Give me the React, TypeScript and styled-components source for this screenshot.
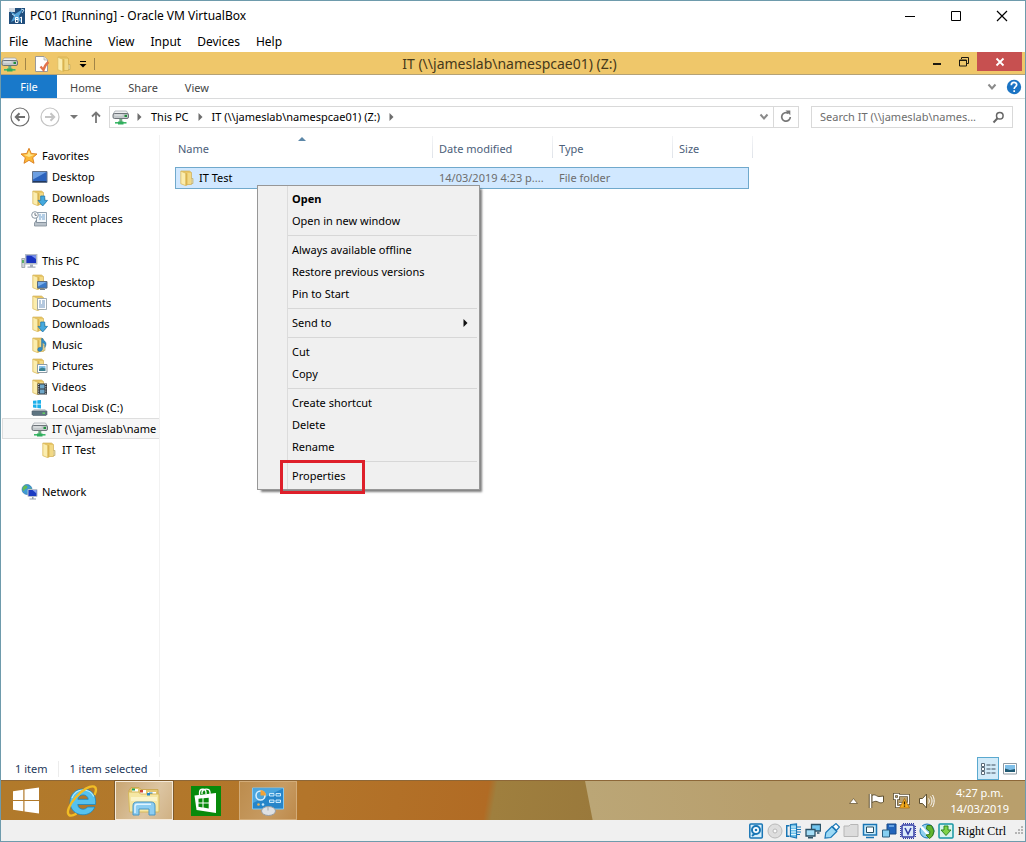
import React from "react";
import styled, { createGlobalStyle, css } from "styled-components";

const GlobalStyle = createGlobalStyle`
  *, *::before, *::after { box-sizing: border-box; }
  body { margin: 0; background: #fff; }
  button, input { font: inherit; color: inherit; }
  button { border: 0; padding: 0; background: none; }
  ul { list-style: none; margin: 0; padding: 0; }
  svg { display: block; flex: none; }
`;

/* ---------- window of the virtual machine ---------- */

const VmWindow = styled.div`
  display: flex;
  flex-direction: column;
  min-height: 100vh;
  border: 1px solid #6e9bac;
  background: #fff;
  color: #000;
  font: 12px/16px "Noto Sans", "Open Sans", sans-serif;
`;

const VmTitleBar = styled.header`
  display: flex;
  align-items: center;
  height: 30px;
  padding-left: 8px;
`;

const VmTitle = styled.h1`
  flex: 1;
  margin: 0 0 0 5px;
  font-size: 12px;
  font-weight: 400;
`;

const VmWindowButton = styled.button`
  display: grid;
  place-items: center;
  width: 46px;
  height: 30px;
`;

const VmMenuBar = styled.nav`
  display: flex;
  gap: 16px;
  height: 21px;
  padding-left: 8px;
`;

const VmMenuItem = styled.button`
  height: 21px;
`;

const VmStatusBar = styled.footer`
  display: flex;
  align-items: center;
  justify-content: flex-end;
  gap: 3px;
  height: 21px;
  padding-right: 2px;
  background: #f0f0f0;
`;

const HostKey = styled.span`
  margin: 0 5px 0 1px;
  font: 12px/16px "Liberation Serif", serif;
`;

/* ---------- Explorer window ---------- */

const Explorer = styled.main`
  display: flex;
  flex: 1;
  flex-direction: column;
  font-size: 11px;
`;

const TitleBar = styled.header`
  display: grid;
  grid-template-columns: 1fr auto 1fr;
  height: 23px;
  padding-right: 7px;
  border-bottom: 1px solid #b5a276;
  background: #efc76a;
`;

const QuickAccess = styled.div`
  display: flex;
  align-items: center;
  gap: 6px;
`;

const QuickDivider = styled.span`
  width: 1px;
  height: 12px;
  margin: 0 2px 0 1px;
  background: #a18548;
`;

const Title = styled.h2`
  margin: 0;
  color: #46391b;
  font-size: 14px;
  font-weight: 400;
  line-height: 24px;
`;

const Controls = styled.div`
  display: flex;
  justify-content: flex-end;
  margin-right: -4px;
`;

const ControlButton = styled.button<{ $close?: boolean }>`
  display: grid;
  place-items: center;
  width: 27px;
  height: 19px;
  ${(p) => p.$close && css`
    width: 45px;
    background: #c75050;
  `}
`;

const Ribbon = styled.nav`
  display: flex;
  align-items: center;
  height: 24px;
  padding-right: 3px;
  border-bottom: 1px solid #dadbdc;
`;

const RibbonTab = styled.button<{ $file?: boolean }>`
  height: 23px;
  padding: 2px 14px 0 13px;
  color: #444;
  ${(p) => p.$file && css`
    width: 56px;
    padding: 0;
    background: #1979ca;
    color: #fff;
  `}
`;

const RibbonEnd = styled.div`
  display: flex;
  align-items: center;
  gap: 9px;
  margin-left: auto;
`;

const IconButton = styled.button<{ $end?: boolean }>`
  display: grid;
  place-items: center;
  margin-left: ${(p) => (p.$end ? "auto" : 0)};
`;

const AddressRow = styled.div`
  display: flex;
  align-items: center;
  height: 36px;
  padding: 0 12px 0 9px;
`;

const NavButtons = styled.div`
  display: flex;
  align-items: center;
  gap: 10px;
  width: 99px;
`;

const AddressBox = styled.div`
  display: flex;
  flex: 1;
  align-items: center;
  gap: 8px;
  height: 22px;
  border: 1px solid #d9d9d9;
  padding-left: 2px;
`;

const AddressEnd = styled.div`
  display: flex;
  align-items: center;
  gap: 4px;
  margin-left: auto;
`;

const Crumb = styled.button`
  padding: 0 1px;
  white-space: nowrap;
`;

const RefreshButton = styled.button`
  display: grid;
  place-items: center;
  width: 25px;
  height: 20px;
  border-left: 1px solid #d9d9d9;
`;

const SearchBox = styled.label`
  display: flex;
  align-items: center;
  width: 202px;
  height: 22px;
  margin-left: 12px;
  padding: 0 7px 0 8px;
  border: 1px solid #d9d9d9;
`;

const SearchInput = styled.input`
  flex: 1;
  min-width: 0;
  padding: 0;
  border: 0;
  outline: 0;
  background: none;
  &::placeholder { color: #6d6d6d; opacity: 1; }
`;

const Body = styled.div`
  display: flex;
  flex: 1;
`;

const Sidebar = styled.nav`
  width: 159px;
  padding-top: 10px;
  border-right: 1px solid #f2f2f2;
`;

const TreeGroup = styled.ul`
  margin-bottom: 21px;
`;

const TreeItem = styled.li<{ $level: number; $selected?: boolean }>`
  display: flex;
  align-items: center;
  gap: 4px;
  height: 21px;
  padding-left: ${(p) => 20 + p.$level * 10}px;
  white-space: nowrap;
  ${(p) => p.$selected && css`
    margin-left: 1px;
    padding-left: ${18 + p.$level * 10}px;
    border: 1px solid #dedede;
    border-right: 0;
    background: #f7f7f7;
  `}
`;

const TreeLink = styled.a`
  color: #000;
  text-decoration: none;
`;

const FilePane = styled.section`
  position: relative;
  flex: 1;
  padding-left: 15px;
`;

const FileTable = styled.table`
  width: 578px;
  table-layout: fixed;
  border-collapse: separate;
  border-spacing: 0;
`;

const Column = styled.col<{ $width: number }>`
  width: ${(p) => p.$width}px;
`;

const HeadCell = styled.th`
  position: relative;
  height: 32px;
  padding: 0 0 4px 6px;
  color: #4c607a;
  font-weight: 400;
  text-align: left;
  &:first-child { padding-left: 3px; }
  &::after {
    content: "";
    position: absolute;
    top: 1px;
    right: 0;
    width: 1px;
    height: 22px;
    background: linear-gradient(#f4f5f7, #dfe3e9);
  }
`;

const SortMark = styled.span`
  position: absolute;
  top: 2px;
  left: 123px;
`;

const Cell = styled.td`
  height: 22px;
  padding: 0 0 0 6px;
  border: 1px solid #70a9cc;
  border-width: 1px 0;
  background: #d1e8ff;
  color: #6d6d6d;
  white-space: nowrap;
  &:first-child {
    padding-left: 3px;
    border-left-width: 1px;
    color: #000;
  }
  &:nth-child(4) { border-right-width: 1px; }
  &:nth-child(5) { padding: 0; border: 0; background: none; }
`;

const FileName = styled.span`
  display: flex;
  align-items: center;
  gap: 3px;
`;

const ContextMenu = styled.ul`
  position: absolute;
  top: 50px;
  left: 97px;
  width: 223px;
  padding: 2px;
  border: 1px solid #979797;
  background: linear-gradient(90deg, transparent 29px, #dcdcdc 29px, #dcdcdc 30px, transparent 30px) #f0f0f0;
  box-shadow: 3px 3px 2px -1px rgba(0, 0, 0, 0.5);
`;

const MenuGroup = styled.li`
  & + &::before {
    content: "";
    display: block;
    height: 1px;
    margin: 3px 0 3px 28px;
    background: #d7d7d7;
  }
`;

const MenuItem = styled.button<{ $default?: boolean }>`
  position: relative;
  display: flex;
  align-items: center;
  justify-content: space-between;
  width: 100%;
  height: 22px;
  padding: 0 9px 0 32px;
  font-weight: ${(p) => (p.$default ? 700 : 400)};
`;

const Highlight = styled.span`
  position: absolute;
  top: -5px;
  left: 20px;
  width: 85px;
  height: 34px;
  border: 3px solid #de1f2a;
`;

const StatusBar = styled.footer`
  display: flex;
  align-items: center;
  height: 23px;
  padding: 0 4px 0 14px;
  color: #1e395b;
`;

const StatusText = styled.span`
  padding-right: 11px;
  margin-right: 10px;
  border-right: 1px solid #ececec;
`;

const ViewButtons = styled.div`
  display: flex;
  margin-left: auto;
`;

const ViewButton = styled.button<{ $active?: boolean }>`
  display: grid;
  place-items: center;
  width: 22px;
  height: 23px;
  border: 1px solid ${(p) => (p.$active ? "#5aa9cf" : "transparent")};
  background: ${(p) => (p.$active ? "#d2eaf8" : "none")};
`;

/* ---------- taskbar ---------- */

const Taskbar = styled.footer`
  display: flex;
  gap: 4px;
  height: 40px;
  padding-right: 16px;
  border-top: 1px solid #8d6738;
  background:
    linear-gradient(79deg, transparent 57.3%, #bba676 57.4%, #b89f6d 75%, #b99f6c),
    linear-gradient(100deg, #b17a2b 0%, #b3752a 30%, #b16b24 47.4%, #9f7f3e 48.2%, #99783b 60%);
  color: #fff;
  font-size: 11px;
`;

const TaskButton = styled.button<{ $state?: "active" | "open"; $start?: boolean }>`
  display: grid;
  place-items: center;
  width: ${(p) => (p.$start ? 48 : 58)}px;
  height: 39px;
  padding-left: ${(p) => (p.$start ? 2 : 0)}px;
  border: 1px solid transparent;
  ${(p) => p.$state === "active" && css`
    border-color: #f6ead9;
    background: linear-gradient(120deg, #c9a673, #dcc5a2 60%, #d0b184);
    box-shadow: 0 0 0 1px #7d5a2c;
  `}
  ${(p) => p.$state === "open" && css`
    border-color: #d3ac78;
    background: linear-gradient(120deg, #bc8c4d, #c79b62 60%, #bd8a4b);
  `}
`;

const Tray = styled.div`
  display: flex;
  align-items: center;
  gap: 8px;
  margin-left: auto;
`;

const Clock = styled.time`
  margin-left: 7px;
  text-align: center;
`;

/* ---------- icons ---------- */

const Folder = ({ children }: { children?: React.ReactNode }) => (
  <svg width="17" height="16" viewBox="0 0 17 16">
    <path d="M2 1h8.500l2 1.500V14.500H6z" fill="#e9c766" stroke="#cfa94a" strokeWidth=".6" />
    <path d="M8 3h4v11H8z" fill="#f2d985" />
    <path d="M1.800 1.200l5 2v12.500l-5-2z" fill="#fbedae" stroke="#dcbb5f" strokeWidth=".8" />
    <path d="M6.800 3.200h1.600v12L6.800 15.700z" fill="#d9b34f" />
    <path d="M12.500 8.500h1.500v5h-1.500" fill="#e3d9a8" stroke="#b9a45c" strokeWidth=".6" />
    {children}
  </svg>
);

const DownArrowPart = () => (
  <path d="M9.700 6h4v4.400h2.800L11.700 16 7 10.400h2.700z" fill="#45a9de" stroke="#2178ae" strokeWidth=".8" />
);

const MonitorPart = () => (
  <g>
    <path d="M6.500 7.500h9.500v6.600H6.500z" fill="#3978c8" stroke="#5c6b7c" />
    <path d="M7 8h8.500L7 12.500z" fill="#79aeea" />
    <path d="M9 15.500h5" stroke="#78818b" />
  </g>
);

const PagePart = () => (
  <g>
    <path d="M6.500 3.500h9v11h-9z" fill="#fff" stroke="#8d9aa5" strokeWidth=".8" />
    <path d="M8 6h2m1 0h3M8 8h2m1 0h3M8 10h6M8 12h6" stroke="#6a92bd" />
  </g>
);

const NotePart = () => (
  <path d="M10.500 1.500v9.200c-1.400-.9-3.800-.2-3.800 2 0 1.700 2.400 2.300 3.900 1 .9-.8.9-1.600.9-3V5.500c2 .8 2.800 2.400 2.300 5 2-3.200 1.500-5.200-.5-6.700-1.300-1-1.300-1.400-1.300-2.300z" fill="#2f8bc7" stroke="#1c6595" strokeWidth=".4" />
);

const PicturePart = () => (
  <g>
    <path d="M6.500 6.500h9.500v8h-9.500z" fill="#fff" stroke="#8d9aa5" />
    <path d="M8 8h6.500v3H8z" fill="#86c2ea" />
    <path d="M8 11l3-1.500 3.500 1V13H8z" fill="#3d8393" />
  </g>
);

const FilmPart = () => (
  <g>
    <path d="M6.500 4.500h9.500v11h-9.500z" fill="#30363d" />
    <path d="M9 5.500h4.500v4H9zM9 10.500h4.500v4H9z" fill="#6fa7c9" />
    <path d="M7.700 5v10M14.800 5v10" stroke="#dfe3e6" strokeDasharray="1 1.200" />
  </g>
);

const StarIcon = () => (
  <svg width="17" height="16" viewBox="0 0 17 16">
    <path d="M8 .3l2.300 5.200 5.700.5-4.300 3.700 1.300 5.600-5-3-5 3 1.300-5.600L0 6l5.700-.5z" fill="#fbb938" stroke="#d97c1b" strokeWidth=".9" />
    <path d="M8 2.500l1.500 4 4 .3L8 9 2.500 6.800l4-.3z" fill="#ffe48a" />
  </svg>
);

const DesktopIcon = () => (
  <svg width="17" height="16" viewBox="0 0 17 16">
    <path d="M1.500 2.500h14.500v11H1.500z" fill="#2c63bd" stroke="#62728a" />
    <path d="M2 3h13.500L2 10.500z" fill="#6d9fe2" />
    <path d="M2 12.500h13.500" stroke="#23395e" />
  </svg>
);

const RecentIcon = () => (
  <svg width="17" height="16" viewBox="0 0 17 16">
    <path d="M5.500 1.500h10v10h-10z" fill="#f4f8fb" stroke="#93a3b1" />
    <path d="M8 4h2m1 0h3M8 6h6M8 8h2m1 0h3" stroke="#72a3d0" />
    <path d="M3.500 12l2-3v2.500h10V15h-12z" fill="#b9c2ca" stroke="#7e8a95" strokeWidth=".8" />
    <circle cx="4" cy="4" r="3.300" fill="#fff" stroke="#8a97a3" />
    <path d="M4 2v2.300h1.800" fill="none" stroke="#4c5a68" strokeWidth=".8" />
  </svg>
);

const ComputerIcon = () => (
  <svg width="17" height="16" viewBox="0 0 17 16">
    <path d="M.8 5.500h3v9h-3z" fill="#d0d5d8" stroke="#8a9299" strokeWidth=".7" />
    <path d="M2 7v3" stroke="#3da642" strokeWidth="1.500" />
    <path d="M4.700 1.700h11v9h-11z" fill="#1a35c0" stroke="#b4bcc8" strokeWidth="1.400" />
    <path d="M10 2.500h5V6z" fill="#7791f0" />
    <path d="M9 11.500h3v2H9zM6.500 13.500h8v1.300h-8z" fill="#a5adb8" />
  </svg>
);

const DiskIcon = () => (
  <svg width="17" height="16" viewBox="0 0 17 16">
    <path d="M2 .8l3.500-.4v3.400H2zM6.300.3L10 0v3.800H6.300zM2 4.600h3.500V8L2 7.600zM6.300 4.600H10v3.800L6.300 8z" fill="#1cb0ea" />
    <path d="M3 9h11l2 2.500H1z" fill="#c7ced3" />
    <path d="M1 11h15v3.500l-1 1H2l-1-1z" fill="#5d7481" stroke="#50606b" strokeWidth=".6" />
    <path d="M11.500 13.200h2.500" stroke="#62e35b" strokeWidth="1.300" />
  </svg>
);

const NetDriveIcon = () => (
  <svg width="17" height="16" viewBox="0 0 17 16">
    <path d="M3 2h11.500L16.300 5H1.200z" fill="#eef0f1" stroke="#9ba2a6" strokeWidth=".7" />
    <rect x="1" y="4.500" width="15.500" height="5" rx="1.500" fill="#c3c8cb" stroke="#62696e" strokeWidth=".9" />
    <path d="M2.500 6h8" stroke="#e8ebec" />
    <path d="M12.500 5.800H15V8h-2.500z" fill="#1f8e3b" />
    <path d="M7.300 10h3v3h-3z" fill="#6cab7f" />
    <path d="M3 13h11.500v1.600H3z" fill="#3cb868" />
    <path d="M6 12.500h5.500v3H6z" fill="#2fae5c" />
  </svg>
);

const NetworkIcon = () => (
  <svg width="17" height="16" viewBox="0 0 17 16">
    <circle cx="6" cy="5.500" r="5" fill="#3f9bd4" stroke="#2c70a3" strokeWidth=".6" />
    <path d="M3 1.800c2-.9 4 0 3.300 1.600S3.600 4.500 3 6.500 1.500 5 1.500 4.500zM7 6l3-2v4l-3 1z" fill="#65bb54" />
    <path d="M7 5.500h9v7H7z" fill="#1c3cc2" stroke="#bac2cd" />
    <path d="M11.500 6h4v3.500z" fill="#87a0ee" />
    <path d="M11 13h1.500v1.500H15v1H8.500v-1H11z" fill="#96a0ab" />
  </svg>
);

const VmLogo = () => (
  <svg width="16" height="16" viewBox="0 0 16 16">
    <path d="M0 0h16v16H0z" fill="#214e7c" />
    <path d="M0 0h6v4H0z" fill="#d3dbe3" />
    <path d="M1 3l5 3 8-5-4 7 3 7-5-4-6 3 3-6z" fill="#55a3d8" />
    <path d="M12 1l3 1-2 3M3 6l3 2" stroke="#b7dcf4" fill="none" />
    <path d="M6.500 9.500H9v2H6.500zm0 2H9v3H6.500zM12.500 9v6M11 10l1.500-1" stroke="#fff" fill="none" />
  </svg>
);

const PropertiesIcon = () => (
  <svg width="16" height="16" viewBox="0 0 16 16">
    <path d="M1.500.5H10l3.500 3.500v11.500h-12z" fill="#fff" stroke="#9a9a9a" />
    <path d="M10 .5V4h3.500" fill="#e3e6ea" stroke="#a7a7a7" strokeWidth=".7" />
    <path d="M6.500 10.500l3 3.500C10.500 10 12 8 14.500 6" fill="none" stroke="#e2744b" strokeWidth="2.300" />
  </svg>
);

const SmallArrow = ({ color = "#6d6d6d" }: { color?: string }) => (
  <svg width="5" height="8" viewBox="0 0 5 8"><path d="M.5 0l4 4-4 4z" fill={color} /></svg>
);

const Chevron = () => (
  <svg width="10" height="8" viewBox="0 0 10 8"><path d="M1.500 1.500L5 5.500l3.500-4" fill="none" stroke="#8a8a8a" strokeWidth="2" /></svg>
);

const NavCircle = ({ forward }: { forward?: boolean }) => (
  <svg width="20" height="20" viewBox="0 0 20 20" fill="none" stroke={forward ? "#c4c4c4" : "#6f6f6f"}>
    <circle cx="10" cy="10" r="9" strokeWidth="1.200" />
    <path d={forward ? "M5 10h9M10.500 6.200l3.700 3.800-3.700 3.800" : "M15 10H6M9.500 6.200L5.800 10l3.700 3.800"} strokeWidth="2" />
  </svg>
);

const WindowsLogo = () => (
  <svg width="28" height="27" viewBox="0 0 28 27">
    <path d="M1 4.200l10.300-1.400v10.100H1zM12.500 2.600L27 .5v12.400H12.500zM1 14.100h10.300v10.100L1 22.800zM12.500 14.100H27v12.400l-14.500-2.100z" fill="#fff" />
  </svg>
);

const IeLogo = () => (
  <svg width="34" height="34" viewBox="0 0 34 34">
    <path d="M30.500 20.500H12.800c.3 3 2.300 4.700 5.200 4.700 2 0 3.500-.8 4.500-2.200h7.300c-1.700 4.700-6.300 7.800-11.900 7.800C10.500 30.800 5 25.500 5 18S10.500 5 18 5c7.700 0 12.700 5.200 12.700 12.800 0 1-.1 1.900-.2 2.700zM12.900 15.300h10.300c-.3-2.800-2.300-4.400-5.100-4.400s-4.800 1.600-5.200 4.400z" fill="#56c2ee" stroke="#1b86c2" strokeWidth=".8" />
    <path d="M7 14c2-5 6-8 11-8 5.500 0 9 2.600 10.800 6.500" fill="none" stroke="#b4ebff" strokeWidth="1.200" />
    <path d="M29.500 11c1.800-4 1.900-7.300-.3-8.300C25.500 1 17 6 10.500 13.500 4 21 1.200 28.700 4 31c1.500 1.200 4.300.5 7.500-1.200" fill="none" stroke="#f2bd25" strokeWidth="2.400" />
  </svg>
);

const ExplorerLogo = () => (
  <svg width="34" height="32" viewBox="0 0 34 32">
    <path d="M2 5.500l2-3h8l2 2h17v6H2z" fill="#e3c771" stroke="#c8a347" strokeWidth=".8" />
    <path d="M5 4h6v4H5zM13 5h6v4h-6zM21 7h8v4h-8z" fill="#fff" />
    <path d="M5 3.500h3v2H5z" fill="#21a353" />
    <path d="M13 5h3v2.500h-3z" fill="#cf4635" />
    <path d="M22 7.500h3.500V10H22z" fill="#2688c5" />
    <path d="M1.500 7h10l2 2h18.500v18H2.500z" fill="#f5e7a4" stroke="#d7b95c" />
    <path d="M20 8h3v2.500h-3z" fill="#2688c5" />
    <path d="M4 12h26v4H4z" fill="#fbf4c9" />
    <path d="M6 30V21c0-3 1.500-4 4-4h14c2.500 0 4 1 4 4v9h-6v-6H12v6z" fill="#8ccdf1" stroke="#4996c5" />
    <path d="M8 28v-6.500c0-1.500.8-2.300 2.300-2.300H24" fill="none" stroke="#dff4ff" strokeWidth="1.500" />
  </svg>
);

const StoreLogo = () => (
  <svg width="30" height="30" viewBox="0 0 30 30">
    <path d="M0 0h30v30H0z" fill="#078a0b" />
    <path d="M3.500 9.500L25 7v20L5.500 24z" fill="#fff" />
    <path d="M8.500 9V6.500c0-4 6-4.500 6.500-.5v2.200M11 8V6c1-3.500 7.500-4 8 0v2" fill="none" stroke="#fff" strokeWidth="1.300" />
    <path d="M7.500 12.700l4-.4v4.100h-4zM12.500 12.200l5.200-.5v4.700h-5.200zM7.500 17.400h4v4l-4-.6zM12.500 17.400h5.200v5l-5.200-.8z" fill="#078a0b" />
  </svg>
);

const ControlPanelLogo = () => (
  <svg width="34" height="30" viewBox="0 0 34 30">
    <path d="M1.500 2h31v21h-31z" fill="#2685c9" stroke="#82c7ef" />
    <path d="M2 2.500h30L2 17z" fill="#4ba5dd" />
    <circle cx="9.500" cy="9.500" r="4.500" fill="none" stroke="#d8f0ff" strokeWidth="1.500" />
    <path d="M9.500 9.500V4A5.500 5.500 0 0 1 15 9.500z" fill="#f2a339" />
    <path d="M18.500 7.500h4.500v2.500h-4.500zM25 7.500h4.500v2.500H25zM18.500 14h4.500v2.500h-4.500zM25 14h4.500v2.500H25z" fill="#3f9bd8" stroke="#d9f1ff" strokeWidth=".9" />
    <circle cx="7.500" cy="18.500" r="1.300" fill="#e9b155" />
    <circle cx="12" cy="18.500" r="1.300" fill="#c6e8fa" />
    <ellipse cx="17.500" cy="25" rx="7" ry="4.500" fill="#dfe1e3" stroke="#989da2" />
    <path d="M17 20.500v4" stroke="#a5a9ad" />
  </svg>
);

const VmStatusIcon = ({ children }: { children: React.ReactNode }) => (
  <svg width="16" height="16" viewBox="0 0 16 16">{children}</svg>
);

const BLUE = "#1976b5";
const vmIcons: React.ReactNode[] = [
  <><rect x="1.800" y="1" width="12.500" height="14" rx="1" fill="#d6effc" stroke={BLUE} strokeWidth="1.500" /><circle cx="8" cy="7" r="4" fill="#fff" stroke={BLUE} strokeWidth="2" /><circle cx="8" cy="7" r="1.300" fill={BLUE} /><path d="M4 13l3-2.500" stroke={BLUE} strokeWidth="2" /></>,
  <><circle cx="8" cy="8" r="7" fill="#dedede" stroke="#b9b9b9" /><circle cx="8" cy="8" r="2" fill="#fafafa" stroke="#b9b9b9" /></>,
  <><path d="M0 2h3.500v1.500H1.500v9h2V14H0z" fill={BLUE} /><path d="M4.500 1.500l6-.5v14l-6-1.500z" fill="#6fc2ea" stroke={BLUE} strokeWidth="1.200" /><path d="M5 4h5M5 6.500h5M5 9h5M5 11.500h5" stroke="#e2f5fd" /><path d="M11 4h4M11 6.500h4M11 9h4M11 11.500h3" stroke={BLUE} strokeWidth="1.200" /></>,
  <><path d="M6.500 1.500h9v6.500h-9z" fill="#72c6ef" stroke="#2b5267" strokeWidth="1.300" /><path d="M1 6.500h9V13H1z" fill="#a5def7" stroke="#2b5267" strokeWidth="1.300" /><path d="M3 14.800h5M12 10h2.500" stroke="#2b5267" strokeWidth="1.500" /></>,
  <><path d="M1 15l.8-5.500 6-6 5 5-6 6z" fill="#9cd9f5" stroke={BLUE} strokeWidth="1.200" /><path d="M8.500 3.500L12 .6 15.400 4l-3 3.500z" fill="#fff" stroke={BLUE} strokeWidth="1.200" /></>,
  <><path d="M1 13.500V3h5l1.500-1.500H15v12z" fill="#dcdcdc" stroke="#b6b6b6" /></>,
  <><path d="M1.500 1.500h13v10.500h-13z" fill="#c8ebfa" stroke={BLUE} strokeWidth="1.500" /><path d="M4.500 4h7v5.500h-7z" fill="#fff" stroke="#254e64" /><path d="M4 14.500h8" stroke={BLUE} strokeWidth="1.500" /></>,
  <><path d="M6 1h9v10H6z" fill="#2264bb" stroke="#174888" /><path d="M1.500 7h7v7h-7z" fill="#85cff1" stroke="#2a5e80" /><path d="M8 3h5" stroke="#7eb7ee" strokeWidth="1.500" /></>,
  <><rect x="2" y="2" width="12" height="12" rx="1" fill="#dcebfb" stroke="#323da5" strokeWidth="1.500" /><path d="M3 .6h11M3 15.400h11M.6 3v11M15.400 3v11" stroke="#323da5" strokeWidth="1.200" strokeDasharray="1 1" /><path d="M5 5l3 6 3-6" fill="none" stroke="#323da5" strokeWidth="1.600" /></>,
  <><circle cx="8" cy="8" r="7" fill="#8fd0ef" stroke={BLUE} /><path d="M2 3.500l9 10" stroke="#fff" strokeWidth="2.500" /><path d="M8 2.500h4.500L15 8l-1.500 5-3 2.500L7 12l3.500-.5.500-3L7.500 6z" fill="#62b52f" stroke="#37791c" /></>,
  <><rect x="1" y="1" width="14" height="14" rx="1" fill="#d8f4ef" stroke="#1795a2" strokeWidth="1.500" /><path d="M6 3h4v4h3l-5 5.500L3 7h3z" fill="#7ed348" stroke="#308421" /></>,
];

/* ---------- content ---------- */

type Node = { label: string; icon: React.ReactNode; level: number; selected?: boolean };

const tree: Node[][] = [
  [
    { label: "Favorites", icon: <StarIcon />, level: 0 },
    { label: "Desktop", icon: <DesktopIcon />, level: 1 },
    { label: "Downloads", icon: <Folder><DownArrowPart /></Folder>, level: 1 },
    { label: "Recent places", icon: <RecentIcon />, level: 1 },
  ],
  [
    { label: "This PC", icon: <ComputerIcon />, level: 0 },
    { label: "Desktop", icon: <Folder><MonitorPart /></Folder>, level: 1 },
    { label: "Documents", icon: <Folder><PagePart /></Folder>, level: 1 },
    { label: "Downloads", icon: <Folder><DownArrowPart /></Folder>, level: 1 },
    { label: "Music", icon: <Folder><NotePart /></Folder>, level: 1 },
    { label: "Pictures", icon: <Folder><PicturePart /></Folder>, level: 1 },
    { label: "Videos", icon: <Folder><FilmPart /></Folder>, level: 1 },
    { label: "Local Disk (C:)", icon: <DiskIcon />, level: 1 },
    { label: "IT (\\\\jameslab\\name", icon: <NetDriveIcon />, level: 1, selected: true },
    { label: "IT Test", icon: <Folder />, level: 2 },
  ],
  [{ label: "Network", icon: <NetworkIcon />, level: 0 }],
];

const menu: string[][] = [
  ["Open", "Open in new window"],
  ["Always available offline", "Restore previous versions", "Pin to Start"],
  ["Send to"],
  ["Cut", "Copy"],
  ["Create shortcut", "Delete", "Rename"],
  ["Properties"],
];

export default function App() {
  return (
    <VmWindow>
      <GlobalStyle />
      <VmTitleBar>
        <VmLogo />
        <VmTitle>PC01 [Running] - Oracle VM VirtualBox</VmTitle>
        <VmWindowButton aria-label="Minimize">
          <svg width="12" height="12"><path d="M1 6.500h10" stroke="#000" /></svg>
        </VmWindowButton>
        <VmWindowButton aria-label="Maximize">
          <svg width="12" height="12"><path d="M1.500 1.500h9v9h-9z" fill="none" stroke="#000" /></svg>
        </VmWindowButton>
        <VmWindowButton aria-label="Close">
          <svg width="12" height="12"><path d="M1 1l10 10M11 1L1 11" stroke="#000" strokeWidth="1.200" /></svg>
        </VmWindowButton>
      </VmTitleBar>
      <VmMenuBar>
        {["File", "Machine", "View", "Input", "Devices", "Help"].map((m) => (
          <VmMenuItem key={m}>{m}</VmMenuItem>
        ))}
      </VmMenuBar>

      <Explorer>
        <TitleBar>
          <QuickAccess>
            <NetDriveIcon />
            <QuickDivider />
            <IconButton aria-label="Properties"><PropertiesIcon /></IconButton>
            <IconButton aria-label="New folder"><Folder /></IconButton>
            <IconButton aria-label="Customize">
              <svg width="8" height="8"><path d="M1 1.500h6" stroke="#000" /><path d="M.5 4h7L4 7.500z" fill="#000" /></svg>
            </IconButton>
            <QuickDivider />
          </QuickAccess>
          <Title>IT (\\jameslab\namespcae01) (Z:)</Title>
          <Controls>
            <ControlButton aria-label="Minimize">
              <svg width="10" height="10"><path d="M1 7h8" stroke="#1e1a10" strokeWidth="2" /></svg>
            </ControlButton>
            <ControlButton aria-label="Restore">
              <svg width="12" height="12"><path d="M1.500 4h7v6h-7zM1 4.500h8" fill="none" stroke="#1e1a10" /><path d="M3.500 3V1.500h7v6H9" fill="none" stroke="#1e1a10" /></svg>
            </ControlButton>
            <ControlButton $close aria-label="Close">
              <svg width="10" height="10"><path d="M1.500 1.500l7 7M8.500 1.500l-7 7" stroke="#fff" strokeWidth="1.800" /></svg>
            </ControlButton>
          </Controls>
        </TitleBar>

        <Ribbon>
          <RibbonTab $file>File</RibbonTab>
          <RibbonTab>Home</RibbonTab>
          <RibbonTab>Share</RibbonTab>
          <RibbonTab>View</RibbonTab>
          <RibbonEnd>
            <IconButton aria-label="Expand the ribbon"><Chevron /></IconButton>
            <IconButton aria-label="Help">
              <svg width="16" height="16" viewBox="0 0 16 16">
                <circle cx="8" cy="8" r="7.200" fill="#1b74c4" />
                <path d="M5.300 6.200c0-3.700 5.400-3.500 5.400-.4 0 1.900-2.500 2-2.500 4.200M8.200 11.300v1.800" fill="none" stroke="#fff" strokeWidth="1.700" />
              </svg>
            </IconButton>
          </RibbonEnd>
        </Ribbon>

        <AddressRow>
          <NavButtons>
            <IconButton aria-label="Back"><NavCircle /></IconButton>
            <IconButton aria-label="Forward"><NavCircle forward /></IconButton>
            <IconButton aria-label="Recent locations">
              <svg width="8" height="6"><path d="M0 1h8L4 5z" fill="#777" /></svg>
            </IconButton>
            <IconButton aria-label="Up">
              <svg width="14" height="12"><path d="M8 12V1.500M4 5.500l4-4 4 4" fill="none" stroke="#777" strokeWidth="1.800" /></svg>
            </IconButton>
          </NavButtons>
          <AddressBox>
            <NetDriveIcon />
            <SmallArrow />
            <Crumb>This PC</Crumb>
            <SmallArrow />
            <Crumb>IT (\\jameslab\namespcae01) (Z:)</Crumb>
            <SmallArrow />
            <AddressEnd>
              <IconButton aria-label="Previous locations"><Chevron /></IconButton>
              <RefreshButton aria-label="Refresh">
                <svg width="14" height="14"><path d="M9.500 3.400A4.300 4.300 0 1 0 11.300 7" fill="none" stroke="#777" strokeWidth="1.700" /><path d="M6.500.5h4.800v4.800z" fill="#777" /></svg>
              </RefreshButton>
            </AddressEnd>
          </AddressBox>
          <SearchBox>
            <SearchInput aria-label="Search" placeholder="Search IT (\\jameslab\names..." />
            <svg width="13" height="13"><circle cx="7.800" cy="4.800" r="3.300" fill="none" stroke="#666" strokeWidth="1.500" /><path d="M5.500 7.300L1.500 11.500" stroke="#666" strokeWidth="2" /></svg>
          </SearchBox>
        </AddressRow>

        <Body>
          <Sidebar>
            {tree.map((group) => (
              <TreeGroup key={group[0].label}>
                {group.map((n) => (
                  <TreeItem key={n.label} $level={n.level} $selected={n.selected}>
                    {n.icon}
                    <TreeLink href="#">{n.label}</TreeLink>
                  </TreeItem>
                ))}
              </TreeGroup>
            ))}
          </Sidebar>
          <FilePane>
            <FileTable>
              <colgroup>
                <Column $width={258} />
                <Column $width={120} />
                <Column $width={120} />
                <Column $width={76} />
                <Column $width={4} />
              </colgroup>
              <thead>
                <tr>
                  <HeadCell>
                    Name
                    <SortMark><svg width="8" height="4"><path d="M0 4l4-4 4 4z" fill="#5c87a8" /></svg></SortMark>
                  </HeadCell>
                  <HeadCell>Date modified</HeadCell>
                  <HeadCell>Type</HeadCell>
                  <HeadCell colSpan={2}>Size</HeadCell>
                </tr>
              </thead>
              <tbody>
                <tr>
                  <Cell><FileName><Folder />IT Test</FileName></Cell>
                  <Cell>14/03/2019 4:23 p....</Cell>
                  <Cell>File folder</Cell>
                  <Cell />
                  <Cell />
                </tr>
              </tbody>
            </FileTable>
            <ContextMenu>
              {menu.map((group) => (
                <MenuGroup key={group[0]}>
                  {group.map((label) => (
                    <MenuItem key={label} $default={label === "Open"}>
                      {label}
                      {label === "Send to" && <SmallArrow color="#111" />}
                      {label === "Properties" && <Highlight />}
                    </MenuItem>
                  ))}
                </MenuGroup>
              ))}
            </ContextMenu>
          </FilePane>
        </Body>

        <StatusBar>
          <StatusText>1 item</StatusText>
          <StatusText>1 item selected</StatusText>
          <ViewButtons>
            <ViewButton $active aria-label="Details">
              <svg width="16" height="14"><path d="M1.500 1.500h3v3h-3zM1.500 5.500h3v3h-3zM1.500 9.500h3v3h-3z" fill="#fff" stroke="#5a6a78" /><path d="M6.500 3h4m1 0h4M6.500 7h4m1 0h4M6.500 11h4m1 0h4" stroke="#3f4f5e" /></svg>
            </ViewButton>
            <ViewButton aria-label="Large icons">
              <svg width="14" height="12"><path d="M.5.500h13v10.500H.5z" fill="#fff" stroke="#8f9aa3" /><path d="M2 2h10v7H2z" fill="#7fbfe8" /><path d="M2 5.500l5 1.500 5-1v3H2z" fill="#1f5872" /></svg>
            </ViewButton>
          </ViewButtons>
        </StatusBar>
      </Explorer>

      <Taskbar>
        <TaskButton $start aria-label="Start"><WindowsLogo /></TaskButton>
        <TaskButton aria-label="Internet Explorer"><IeLogo /></TaskButton>
        <TaskButton $state="active" aria-label="File Explorer"><ExplorerLogo /></TaskButton>
        <TaskButton aria-label="Store"><StoreLogo /></TaskButton>
        <TaskButton $state="open" aria-label="Control Panel"><ControlPanelLogo /></TaskButton>
        <Tray>
          <IconButton aria-label="Show hidden icons">
            <svg width="12" height="8"><path d="M1.500 6.500h8L5.500 1.500z" fill="#fff" stroke="#6d5c38" strokeWidth=".8" /></svg>
          </IconButton>
          <IconButton aria-label="Action Center">
            <svg width="17" height="18"><path d="M2.500 2v14" stroke="#5f5132" strokeWidth="3.500" /><path d="M4 3.500c3-2 4.500 1 7 1l4.500-.5v6c-3 2-5 0-6.500-.5S6 9.500 4 10.500z" fill="#fff" stroke="#5f5132" /><path d="M2.500 2v14" stroke="#fff" strokeWidth="1.600" /></svg>
          </IconButton>
          <IconButton aria-label="Network">
            <svg width="17" height="18">
              <path d="M6 3.500h9.500v8H6M1.500 2.500h4v4h-4zM3.500 6.500v8h4" fill="none" stroke="#5f5132" strokeWidth="3" />
              <path d="M6 3.500h9.500v8H6M1.500 2.500h4v4h-4zM3.500 6.500v8h4" fill="none" stroke="#fff" strokeWidth="1.300" />
              <path d="M11.500 6.500l5 9.500H6.500z" fill="#f7ac1d" stroke="#a5690d" strokeWidth=".7" />
              <path d="M11.500 9.500v3m0 1v1.300" stroke="#2d1e04" strokeWidth="1.300" />
            </svg>
          </IconButton>
          <IconButton aria-label="Volume">
            <svg width="17" height="18"><path d="M1.500 6.500h3L8.500 2v14l-4-4.500h-3z" fill="#fff" stroke="#5f5132" /><path d="M10.500 6.500c1 1.500 1 3.500 0 5M12.500 4.500c2 2.500 2 6.500 0 9M14.500 3c2.200 3.500 2.200 8.500 0 12" fill="none" stroke="#fff" /></svg>
          </IconButton>
          <Clock>4:27 p.m.<br />14/03/2019</Clock>
        </Tray>
      </Taskbar>

      <VmStatusBar>
        {vmIcons.map((icon, i) => <VmStatusIcon key={i}>{icon}</VmStatusIcon>)}
        <HostKey>Right Ctrl</HostKey>
        <svg width="9" height="9"><path d="M7 1h2M4 4h2M7 4h2M1 7h2M4 7h2M7 7h2" stroke="#b5b5b5" strokeWidth="2" /></svg>
      </VmStatusBar>
    </VmWindow>
  );
}
